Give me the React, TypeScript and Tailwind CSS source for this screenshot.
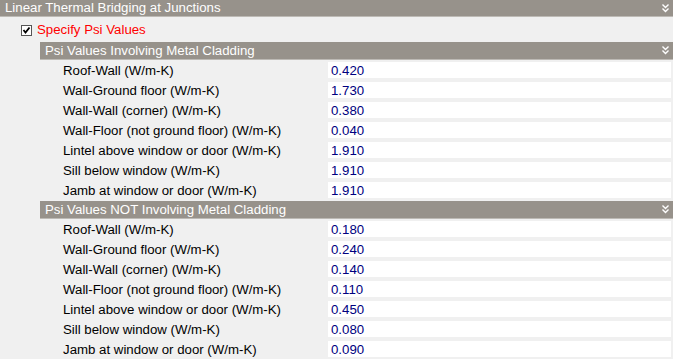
const metal = [
  ["Roof-Wall (W/m-K)", "0.420"],
  ["Wall-Ground floor (W/m-K)", "1.730"],
  ["Wall-Wall (corner) (W/m-K)", "0.380"],
  ["Wall-Floor (not ground floor) (W/m-K)", "0.040"],
  ["Lintel above window or door (W/m-K)", "1.910"],
  ["Sill below window (W/m-K)", "1.910"],
  ["Jamb at window or door (W/m-K)", "1.910"],
];

const nonMetal = [
  ["Roof-Wall (W/m-K)", "0.180"],
  ["Wall-Ground floor (W/m-K)", "0.240"],
  ["Wall-Wall (corner) (W/m-K)", "0.140"],
  ["Wall-Floor (not ground floor) (W/m-K)", "0.110"],
  ["Lintel above window or door (W/m-K)", "0.450"],
  ["Sill below window (W/m-K)", "0.080"],
  ["Jamb at window or door (W/m-K)", "0.090"],
];

const Chevrons = () => (
  <svg width="7" height="9" viewBox="0 0 7 9" className="shrink-0">
    <polyline points="0.5,0.5 3.5,3.5 6.5,0.5" fill="none" stroke="#fff" strokeWidth="1.4" />
    <polyline points="0.5,4.5 3.5,7.5 6.5,4.5" fill="none" stroke="#fff" strokeWidth="1.4" />
  </svg>
);

const Bar = ({ title, tall }: { title: string; tall?: boolean }) => (
  <div
    className={`flex items-center justify-between bg-[#97928b] border-b border-[#bdbab5] pl-[5px] pr-[4px] text-white ${
      tall ? "h-[18px]" : "h-[17px]"
    }`}
  >
    <span className="leading-[16px]">{title}</span>
    <Chevrons />
  </div>
);

const Rows = ({ rows }: { rows: string[][] }) => (
  <div className="flex flex-col gap-[4px] pt-[2px] pr-[2px]">
    {rows.map(([label, value]) => (
      <div key={label} className="flex h-[16px]">
        <div className="w-[288px] shrink-0 pl-[23px] leading-[17px] text-black">{label}</div>
        <div className="flex-1 bg-white pl-[3px] leading-[17px] text-[#000080]">{value}</div>
      </div>
    ))}
  </div>
);

export default function App() {
  return (
    <div className="w-[673px] h-[359px] overflow-hidden bg-[#f0f0f0] font-['Liberation_Sans',Arial,sans-serif] text-[13.25px]">
      <Bar title="Linear Thermal Bridging at Junctions" />

      <div className="flex h-[25px] items-center pl-[21px] pt-[1px]">
        <div className="flex h-[11px] w-[11px] items-center justify-center border border-[#555] bg-white">
          <svg width="9" height="9" viewBox="0 0 9 9">
            <polyline points="1.5,4 3.5,6.5 7.5,1.5" fill="none" stroke="#000" strokeWidth="1.8" />
          </svg>
        </div>
        <span className="ml-[5px] leading-[16px] text-[#ff0000]">Specify Psi Values</span>
      </div>

      <div className="ml-[40px]">
        <Bar title="Psi Values Involving Metal Cladding" tall />
        <Rows rows={metal} />
        <div className="mt-[3px]">
          <Bar title="Psi Values NOT Involving Metal Cladding" tall />
        </div>
        <Rows rows={nonMetal} />
      </div>
    </div>
  );
}
